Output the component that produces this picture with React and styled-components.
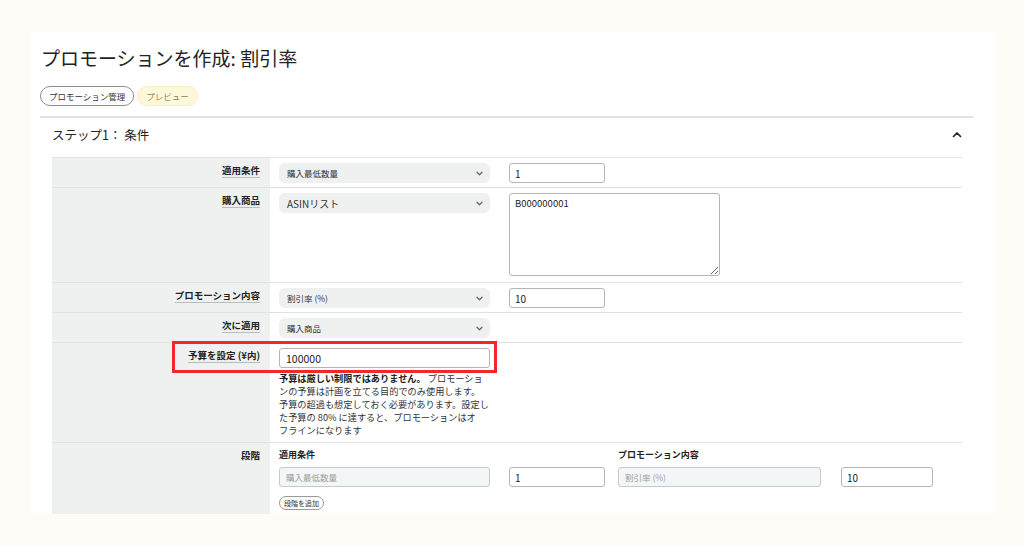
import React from 'react'
import styled, { createGlobalStyle } from 'styled-components'

const GlobalStyle = createGlobalStyle`
  body {
    margin: 0;
    background: #fdfcf6;
    font-family: "Noto Sans CJK JP", "Noto Sans", sans-serif;
    color: #2b2b2b;
  }
`

const Chevron = ({ up }) =>
  up ? (
    <svg width="10" height="7" viewBox="0 0 10 7" fill="none">
      <path d="M1.5 5.5 L5 2 L8.5 5.5" stroke="#222" strokeWidth="1.7" strokeLinecap="round" strokeLinejoin="round" />
    </svg>
  ) : (
    <svg width="7" height="5" viewBox="0 0 7 5" fill="none">
      <path d="M1 1.2 L3.5 3.7 L6 1.2" stroke="#666" strokeWidth="1.3" strokeLinecap="round" strokeLinejoin="round" />
    </svg>
  )

const helpLines = [
  'ンの予算は計画を立てる目的でのみ使用します。',
  '予算の超過も想定しておく必要があります。設定し',
  'た予算の 80% に達すると、プロモーションはオ',
  'フラインになります',
]

export default function App() {
  return (
    <>
      <GlobalStyle />
      <Page>
        <Card>
          <Title>プロモーションを作成: 割引率</Title>
          <Pills>
            <Pill>プロモーション管理</Pill>
            <Pill $yellow>プレビュー</Pill>
          </Pills>
          <Divider />
          <StepHeader>
            <span>ステップ1： 条件</span>
            <Chevron up />
          </StepHeader>
          <Table>
            <Row>
              <LabelCell><Label>適用条件</Label></LabelCell>
              <FieldCell>
                <Select>購入最低数量<Chevron /></Select>
                <Input defaultValue="1" />
              </FieldCell>
            </Row>
            <Row>
              <LabelCell><Label>購入商品</Label></LabelCell>
              <FieldCell $bottom={6}>
                <Select $big>ASINリスト<Chevron /></Select>
                <TextArea defaultValue="B000000001" />
              </FieldCell>
            </Row>
            <Row>
              <LabelCell><Label>プロモーション内容</Label></LabelCell>
              <FieldCell>
                <Select>割引率 (%)<Chevron /></Select>
                <Input defaultValue="10" />
              </FieldCell>
            </Row>
            <Row>
              <LabelCell><Label>次に適用</Label></LabelCell>
              <FieldCell>
                <Select>購入商品<Chevron /></Select>
              </FieldCell>
            </Row>
            <Row>
              <RedBox />
              <LabelCell><Label>予算を設定 (¥内)</Label></LabelCell>
              <FieldCell $column $bottom={5}>
                <BudgetInput defaultValue="100000" />
                <Help>
                  <HelpLine><b>予算は厳しい制限ではありません。</b> プロモーショ</HelpLine>
                  {helpLines.map(l => (
                    <HelpLine key={l}>{l}</HelpLine>
                  ))}
                </Help>
              </FieldCell>
            </Row>
            <Row>
              <LabelCell><Label $plain>段階</Label></LabelCell>
              <TierCell>
                <TierGrid>
                  <TierHead $col="1">適用条件</TierHead>
                  <TierHead $col="5 / span 3">プロモーション内容</TierHead>
                  <Disabled $col="1">購入最低数量</Disabled>
                  <TierInput $col="3" defaultValue="1" />
                  <Disabled $col="5">割引率 (%)</Disabled>
                  <TierInput $col="7" defaultValue="10" />
                </TierGrid>
                <SmallButton>段階を追加</SmallButton>
              </TierCell>
            </Row>
          </Table>
        </Card>
      </Page>
    </>
  )
}

const Page = styled.div`
  padding: 32px 29px 0 30px;
  height: 546px;
  box-sizing: border-box;
`
const Card = styled.div`
  background: #fff;
  width: 965px;
  height: 482px;
  box-sizing: border-box;
  padding: 13px 22px 0 10px;
  overflow: hidden;
`
const Title = styled.h1`
  margin: 0 0 0 1px;
  font-size: 19px;
  line-height: 26px;
  font-weight: 400;
  color: #222;
`
const Pills = styled.div`
  display: flex;
  gap: 3px;
  margin-top: 15px;
`
const Pill = styled.div`
  height: 20px;
  box-sizing: border-box;
  padding: 0 8px;
  border-radius: 11px;
  border: 1px solid ${p => (p.$yellow ? '#f5efc4' : '#8d8d8d')};
  background: ${p => (p.$yellow ? '#fdf8d9' : '#fff')};
  color: ${p => (p.$yellow ? '#8a8463' : '#333')};
  font-size: 8.5px;
  line-height: 18px;
`
const Divider = styled.div`
  margin-top: 10px;
  height: 2px;
  background: #e1e3e3;
`
const StepHeader = styled.div`
  height: 39px;
  box-sizing: border-box;
  display: flex;
  align-items: center;
  justify-content: space-between;
  padding: 0 11px 6px 12px;
  font-size: 12.5px;
  line-height: 18px;
  color: #222;
`
const Table = styled.div`
  margin: 0 11px 0 12px;
  border-top: 1px solid #e0e3e3;
`
const Row = styled.div`
  position: relative;
  display: grid;
  grid-template-columns: 218px 1fr;
  border-bottom: 1px solid #dfe2e2;
`
const LabelCell = styled.div`
  background: #eef1f0;
  text-align: right;
  padding: 5px 10px 0 0;
  font-size: 9.5px;
  line-height: 14px;
`
const Label = styled.span`
  font-weight: 700;
  color: #222;
  border-bottom: ${p => (p.$plain ? 'none' : '1px solid #b9bcbc')};
`
const FieldCell = styled.div`
  display: flex;
  flex-direction: ${p => (p.$column ? 'column' : 'row')};
  align-items: flex-start;
  gap: ${p => (p.$column ? '4px' : '19px')};
  padding: 5px 0 ${p => p.$bottom || 4}px 9px;
`
const Select = styled.div`
  width: 211px;
  height: 20px;
  box-sizing: border-box;
  display: flex;
  align-items: center;
  justify-content: space-between;
  padding: 0 7px 0 8px;
  background: #eff1f1;
  border-radius: 6px;
  font-size: ${p => (p.$big ? '10px' : '8.5px')};
  color: #333;
`
const Input = styled.input`
  width: 96px;
  height: 20px;
  box-sizing: border-box;
  margin: 0;
  border: 1px solid #b3b6b6;
  border-radius: 3px;
  padding: 0 5px;
  font-family: inherit;
  font-size: 10px;
  color: #222;
  background: #fff;
  outline: none;
`
const TierInput = styled(Input)`
  width: 100%;
  grid-column: ${p => p.$col};
  grid-row: 2;
`
const BudgetInput = styled(Input)`
  width: 211px;
  font-size: 10.5px;
  padding: 0 6px;
`
const TextArea = styled.textarea`
  width: 211px;
  height: 83px;
  box-sizing: border-box;
  margin: 0;
  border: 1px solid #b3b6b6;
  border-radius: 3px;
  padding: 3px 5px;
  font-family: inherit;
  font-size: 9.5px;
  line-height: 13px;
  color: #222;
  resize: both;
  outline: none;
`
const Help = styled.div`
  width: 214px;
  font-size: 9.2px;
  line-height: 13px;
  color: #333;
  b {
    color: #222;
  }
`
const HelpLine = styled.div`
  white-space: nowrap;
`
const RedBox = styled.div`
  position: absolute;
  left: 120px;
  top: -2px;
  width: 325px;
  height: 32px;
  box-sizing: border-box;
  border: 3px solid #f3262c;
  pointer-events: none;
`
const TierCell = styled.div`
  padding: 5px 0 5px 9px;
`
const TierGrid = styled.div`
  display: grid;
  grid-template-columns: 211px 19px 96px 13px 203px 20px 92px;
  grid-template-rows: 14px 20px;
  row-gap: 5px;
`
const TierHead = styled.div`
  grid-column: ${p => p.$col};
  grid-row: 1;
  font-size: 9px;
  font-weight: 700;
  color: #222;
  line-height: 14px;
`
const Disabled = styled.div`
  grid-column: ${p => p.$col};
  grid-row: 2;
  height: 20px;
  box-sizing: border-box;
  border: 1px solid #c4c9c9;
  border-radius: 3px;
  background: #f2f6f6;
  color: #9a9e9e;
  font-size: 8.5px;
  line-height: 18px;
  padding: 0 6px;
`
const SmallButton = styled.div`
  display: inline-block;
  margin-top: 6px;
  height: 14px;
  box-sizing: border-box;
  padding: 0 4px;
  border: 1px solid #999;
  border-radius: 7px;
  font-size: 7px;
  line-height: 12px;
  color: #333;
`
